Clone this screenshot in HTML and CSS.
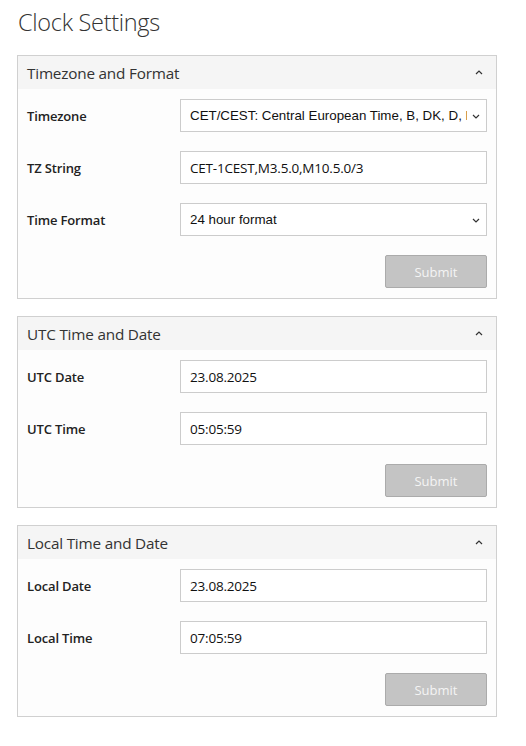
FILE: index.html
```html
<!DOCTYPE html>
<html>
<head>
<meta charset="utf-8">
<link rel="stylesheet" href="styles.css">
</head>
<body>
<h1 class="title">Clock Settings</h1>

<section class="card">
  <div class="card-head"><span>Timezone and Format</span><svg class="caret" width="8" height="5" viewBox="0 0 8 5"><path d="M1 4 L4 1 L7 4" fill="none" stroke="#333" stroke-width="1.2"/></svg></div>
  <div class="card-body">
    <label class="lbl">Timezone</label>
    <div class="sel-wrap">
      <div class="field sel"><span class="sel-text">CET/CEST: Central European Time, B, DK, D, F, I, NL, A, CH</span></div>
      <svg class="sel-arrow" width="8" height="5" viewBox="0 0 8 5"><path d="M1 1 L4 4 L7 1" fill="none" stroke="#333" stroke-width="1.2"/></svg>
    </div>
    <label class="lbl">TZ String</label>
    <div class="field">CET-1CEST,M3.5.0,M10.5.0/3</div>
    <label class="lbl">Time Format</label>
    <div class="sel-wrap">
      <div class="field sel"><span class="sel-text">24 hour format</span></div>
      <svg class="sel-arrow" width="8" height="5" viewBox="0 0 8 5"><path d="M1 1 L4 4 L7 1" fill="none" stroke="#333" stroke-width="1.2"/></svg>
    </div>
    <div class="actions"><button class="btn">Submit</button></div>
  </div>
</section>

<section class="card">
  <div class="card-head"><span>UTC Time and Date</span><svg class="caret" width="8" height="5" viewBox="0 0 8 5"><path d="M1 4 L4 1 L7 4" fill="none" stroke="#333" stroke-width="1.2"/></svg></div>
  <div class="card-body">
    <label class="lbl">UTC Date</label>
    <div class="field">23.08.2025</div>
    <label class="lbl">UTC Time</label>
    <div class="field">05:05:59</div>
    <div class="actions"><button class="btn">Submit</button></div>
  </div>
</section>

<section class="card">
  <div class="card-head"><span>Local Time and Date</span><svg class="caret" width="8" height="5" viewBox="0 0 8 5"><path d="M1 4 L4 1 L7 4" fill="none" stroke="#333" stroke-width="1.2"/></svg></div>
  <div class="card-body">
    <label class="lbl">Local Date</label>
    <div class="field">23.08.2025</div>
    <label class="lbl">Local Time</label>
    <div class="field">07:05:59</div>
    <div class="actions"><button class="btn">Submit</button></div>
  </div>
</section>
</body>
</html>
```

FILE: styles.css
```css
html, body {
  margin: 0;
  padding: 0;
  background: #ffffff;
}
body {
  padding: 0 29px 0 17px;
  font-family: "Open Sans", sans-serif;
  color: #222;
}
.title {
  margin: 0;
  height: 55px;
  padding: 6px 0 0 1px;
  box-sizing: border-box;
  font-size: 23.5px;
  font-weight: 300;
  color: #333;
  letter-spacing: -0.3px;
}
.card {
  border: 1px solid #d0d0d0;
  background: #fdfdfd;
  margin-bottom: 17px;
}
.card-head {
  height: 33px;
  background: #f5f5f5;
  display: flex;
  align-items: center;
  justify-content: space-between;
  padding: 0 13px 0 9px;
  font-size: 15.3px;
  color: #333;
  letter-spacing: -0.2px;
}
.caret {
  display: block;
}
.card-body {
  display: grid;
  grid-template-columns: 153px 307px;
  row-gap: 19px;
  padding: 10px 9px 10px 9px;
  align-items: center;
}
.lbl {
  font-size: 13px;
  font-weight: 600;
  color: #222;
  letter-spacing: -0.15px;
}
.field {
  height: 33px;
  box-sizing: border-box;
  border: 1px solid #cccccc;
  background: #ffffff;
  padding: 0 9px;
  display: flex;
  align-items: center;
  font-size: 13.5px;
  color: #111;
  letter-spacing: -0.2px;
  white-space: nowrap;
  overflow: hidden;
}
.sel-wrap {
  position: relative;
}
.sel {
  font-family: "Liberation Sans", Arial, sans-serif;
  font-size: 13.333px;
  letter-spacing: 0;
  padding-right: 19px;
}
.sel-text {
  display: block;
  overflow: hidden;
  white-space: nowrap;
}
.sel-arrow {
  position: absolute;
  right: 7px;
  top: 15px;
}
.actions {
  grid-column: 1 / 3;
  display: flex;
  justify-content: flex-end;
}
.btn {
  width: 102px;
  height: 33px;
  border: 1px solid #ababab;
  border-radius: 2px;
  background: #c4c4c4;
  color: #f4f4f4;
  font-family: "Open Sans", sans-serif;
  font-size: 13px;
  padding: 0;
}
```
